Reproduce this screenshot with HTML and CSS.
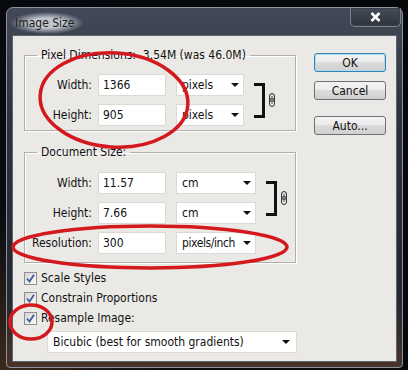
FILE: index.html
```html
<!DOCTYPE html>
<html lang="en">
<head>
    <meta charset="UTF-8">
    <title>Image Size</title>
    <link rel="stylesheet" href="styles.css">
</head>
<body>
    <div class="window">
        <div class="titlebar">
            <span class="title">Image Size</span>
            <span class="close">
                <svg width="11" height="10" viewBox="0 0 11 10"><path d="M1.5 1 L9.5 9 M9.5 1 L1.5 9" stroke="#fff" stroke-width="2.6"/></svg>
            </span>
        </div>
        <div class="client">
            <div class="main">
                <!-- pixel dimensions -->
                <fieldset class="group">
                    <legend>Pixel Dimensions:&nbsp; 3.54M (was 46.0M)</legend>
                    <div class="linked">
                        <div class="rows">
                            <div class="row">
                                <label>Width:</label>
                                <input type="text" value="1366">
                                <div class="select">pixels<span class="arrow"></span></div>
                            </div>
                            <div class="row">
                                <label>Height:</label>
                                <input type="text" value="905">
                                <div class="select">pixels<span class="arrow"></span></div>
                            </div>
                        </div>
                        <div class="bracket"></div>
                        <svg class="chain" width="8" height="14" viewBox="0 0 8 14"><rect x="1.5" y="0.5" width="5" height="8" rx="2.5" fill="#d8d8d8" stroke="#333"/><rect x="1.5" y="5.5" width="5" height="8" rx="2.5" fill="none" stroke="#333"/><line x1="4" y1="3" x2="4" y2="11" stroke="#555"/></svg>
                    </div>
                </fieldset>

                <!-- document size -->
                <fieldset class="group doc">
                    <legend>Document Size:</legend>
                    <div class="linked">
                        <div class="rows">
                            <div class="row">
                                <label>Width:</label>
                                <input type="text" value="11.57">
                                <div class="select wide">cm<span class="arrow"></span></div>
                            </div>
                            <div class="row">
                                <label>Height:</label>
                                <input type="text" value="7.66">
                                <div class="select wide">cm<span class="arrow"></span></div>
                            </div>
                        </div>
                        <div class="bracket"></div>
                        <svg class="chain" width="8" height="14" viewBox="0 0 8 14"><rect x="1.5" y="0.5" width="5" height="8" rx="2.5" fill="#d8d8d8" stroke="#333"/><rect x="1.5" y="5.5" width="5" height="8" rx="2.5" fill="none" stroke="#333"/><line x1="4" y1="3" x2="4" y2="11" stroke="#555"/></svg>
                    </div>
                    <div class="row">
                        <label>Resolution:</label>
                        <input type="text" value="300">
                        <div class="select wide tight">pixels/inch<span class="arrow"></span></div>
                    </div>
                </fieldset>

                <div class="check first"><span class="box"><svg width="9" height="9" viewBox="0 0 9 9"><path d="M1 4.5 L3.5 7.5 L8 0.8" fill="none" stroke="#3d5a96" stroke-width="1.8"/></svg></span>Scale Styles</div>
                <div class="check"><span class="box"><svg width="9" height="9" viewBox="0 0 9 9"><path d="M1 4.5 L3.5 7.5 L8 0.8" fill="none" stroke="#3d5a96" stroke-width="1.8"/></svg></span>Constrain Proportions</div>
                <div class="check"><span class="box"><svg width="9" height="9" viewBox="0 0 9 9"><path d="M1 4.5 L3.5 7.5 L8 0.8" fill="none" stroke="#3d5a96" stroke-width="1.8"/></svg></span>Resample Image:</div>

                <div class="select method">Bicubic (best for smooth gradients)<span class="arrow"></span></div>
            </div>

            <div class="buttons">
                <button class="default">OK</button>
                <button>Cancel</button>
                <button class="auto">Auto...</button>
            </div>
        </div>
    </div>

    <!-- red marker rings drawn over the dialog -->
    <svg class="marks" width="408" height="370" viewBox="0 0 408 370">
        <ellipse cx="114" cy="100" rx="74" ry="47" transform="rotate(4 114 100)"/>
        <ellipse cx="150" cy="247" rx="137" ry="21"/>
        <ellipse cx="31" cy="322" rx="21" ry="17"/>
    </svg>
</body>
</html>
```

FILE: styles.css
```css
body {
    margin: 0;
    width: 408px;
    height: 370px;
    overflow: hidden;
    background: radial-gradient(ellipse at 0 100%, #3a2a1c 0, #0a0c12 30%, #05070b 100%);
    font-family: "DejaVu Sans Condensed", "DejaVu Sans", sans-serif;
    font-size: 12px;
    color: #111;
}
.window {
    margin: 7px 5px 0 6px;
    height: 354px;
    padding: 0 5px 5px 5px;
    border: 1px solid #8d939c;
    border-radius: 7px 7px 4px 4px;
    background: linear-gradient(to bottom, #434a57 0, #2c323d 30%, #23272f 80%, #4a3328 100%);
}
.titlebar {
    height: 27px;
    display: flex;
    justify-content: space-between;
}
.title {
    align-self: center;
    margin: 2px 0 0 -2px;
    padding: 4px 10px 4px 5px;
    color: #1c1c1c;
    background: radial-gradient(ellipse closest-side, rgba(200, 205, 212, 0.95) 45%, rgba(130, 138, 150, 0) 100%);
}
.close {
    width: 49px;
    height: 18px;
    margin-right: -4px;
    display: flex;
    align-items: center;
    justify-content: center;
    border: 1px solid #7c828c;
    border-top: none;
    border-radius: 0 0 5px 5px;
    box-shadow: inset 0 0 0 1px #3a404a;
    background: linear-gradient(to bottom, #454c58, #2e343e);
}
.client {
    height: 313px;
    display: flex;
    padding: 12px 0 0 11px;
    border: 1px solid #5c6470;
    background: #ebe9e6;
}
.main {
    width: 272px;
}
.group {
    margin: 0;
    padding: 12px 0 4px 0;
    border: 1px solid #b2aea9;
    box-shadow: 1px 1px 0 #fff, inset 1px 1px 0 #fff;
    line-height: 14px;
}
.group legend {
    margin-left: 12px;
    padding: 0 4px;
}
.doc {
    margin-top: 14px;
    padding: 13px 0 8px 0;
}
.linked {
    display: flex;
    align-items: center;
}
.rows {
    display: flex;
    flex-direction: column;
    gap: 8px;
}
.doc .linked {
    margin-bottom: 8px;
}
.row {
    display: flex;
    align-items: center;
    height: 22px;
}
.row label {
    width: 67px;
    margin-right: 6px;
    text-align: right;
}
.row input {
    box-sizing: border-box;
    width: 68px;
    height: 22px;
    margin: 0;
    padding: 0 4px;
    border: 1px solid #dcd9d5;
    background: #fff;
    font: inherit;
    color: #111;
}
.select {
    box-sizing: border-box;
    width: 68px;
    height: 22px;
    margin-left: 10px;
    padding: 0 4px 0 5px;
    display: flex;
    align-items: center;
    justify-content: space-between;
    white-space: nowrap;
    border: 1px solid #dcd9d5;
    background: #fff;
}
.select.wide {
    width: 80px;
}
.select.tight {
    letter-spacing: -0.4px;
}
.arrow {
    flex-shrink: 0;
    width: 0;
    height: 0;
    margin-left: 3px;
    border-left: 4px solid transparent;
    border-right: 4px solid transparent;
    border-top: 4px solid #111;
}
.bracket {
    width: 8px;
    height: 29px;
    margin-left: 10px;
    border: 3px solid #111;
    border-left: none;
}
.chain {
    margin-left: 3px;
}
.check {
    display: flex;
    align-items: center;
    height: 20px;
}
.check.first {
    margin-top: 5px;
}
.box {
    box-sizing: border-box;
    width: 13px;
    height: 13px;
    margin-right: 4px;
    display: flex;
    align-items: center;
    justify-content: center;
    border: 1px solid #8e8f8f;
    background: linear-gradient(135deg, #d6d6d6, #fbfbfb);
}
.select.method {
    width: 250px;
    margin: 3px 0 0 23px;
    padding-right: 6px;
}
.buttons {
    display: flex;
    flex-direction: column;
    margin: 5px 0 0 18px;
}
.buttons button {
    width: 72px;
    height: 19px;
    padding: 0;
    border: 1px solid #707070;
    border-radius: 3px;
    background: linear-gradient(to bottom, #f3f3f3 0, #ebebeb 50%, #dcdcdc 50%, #cfcfcf 100%);
    font: inherit;
    color: #111;
}
.buttons button + button {
    margin-top: 9px;
}
.buttons .default {
    border-color: #3c7fb1;
    box-shadow: inset 0 0 0 1px #a9dcf6;
}
.buttons .auto {
    margin-top: 16px;
}
.marks {
    position: absolute;
    top: 0;
    left: 0;
    pointer-events: none;
}
.marks ellipse {
    fill: none;
    stroke: #d3191e;
    stroke-width: 3.5;
}
```
